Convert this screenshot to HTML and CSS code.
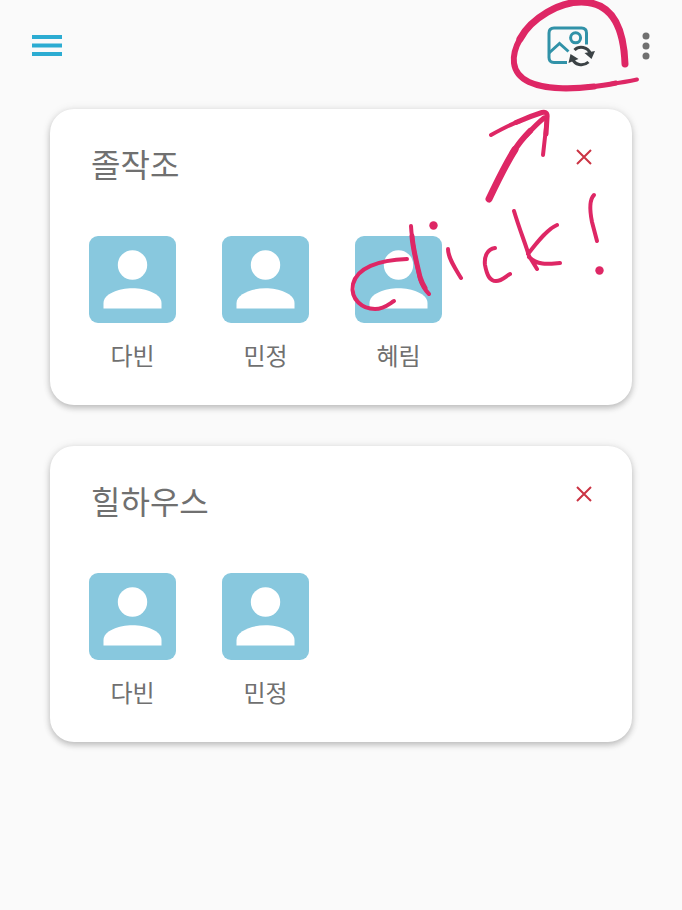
FILE: index.html
```html
<!DOCTYPE html>
<html lang="ko">
<head>
<meta charset="utf-8">
<meta name="viewport" content="width=device-width, initial-scale=1">
<title>그룹</title>
<link rel="stylesheet" href="styles.css">
</head>
<body>
<svg class="defs" aria-hidden="true">
  <symbol id="person" viewBox="0 0 87 87">
    <circle cx="43.5" cy="29" r="14.7"/>
    <path d="M14.5 72.5V67C14.5 58 30 52.3 43.5 52.3S72.500 58 72.500 67V72.500Z"/>
  </symbol>
  <symbol id="cross" viewBox="0 0 16 16">
    <path d="M1 1L15 15M15 1L1 15"/>
  </symbol>
</svg>
<div class="app">
  <header class="bar">
    <button class="icon-button" aria-label="메뉴">
      <svg class="menu-icon" viewBox="0 0 30 22"><path d="M0 2H30M0 10.500H30M0 19H30"/></svg>
    </button>
    <div class="actions">
      <button class="icon-button" aria-label="사진 변경">
        <svg class="photo-icon" viewBox="0 0 50 44">
          <path class="frame" d="M21 38.500H8Q3 38.500 3 33.500V9Q3 4 8 4H35.500Q40.500 4 40.500 9V20.500"/>
          <path class="frame" d="M3 29L13.500 19.500L22.500 27.500"/>
          <circle class="frame" cx="29.600" cy="13.800" r="5"/>
          <path class="arrow" d="M28.500 26C33 21.500 42 22.500 44.500 30M42.500 38C37 43 28.500 41 26.500 34.500"/>
          <path class="head" d="M38.500 29L49 27L45.500 35ZM22.500 39L24.500 30L32.500 35Z"/>
        </svg>
      </button>
      <button class="icon-button" aria-label="더보기">
        <svg class="more-icon" viewBox="0 0 8 28"><circle cx="4" cy="4" r="3.500"/><circle cx="4" cy="14" r="3.500"/><circle cx="4" cy="24" r="3.500"/></svg>
      </button>
    </div>
  </header>
  <main class="groups">
    <section class="card">
      <div class="card-head">
        <h2 class="title">졸작조</h2>
        <button class="icon-button" aria-label="졸작조 삭제"><svg class="close-icon"><use href="#cross"/></svg></button>
      </div>
      <ul class="members">
        <li class="member"><svg class="avatar"><use href="#person"/></svg><span>다빈</span></li>
        <li class="member"><svg class="avatar"><use href="#person"/></svg><span>민정</span></li>
        <li class="member"><svg class="avatar"><use href="#person"/></svg><span>혜림</span></li>
      </ul>
    </section>
    <section class="card">
      <div class="card-head">
        <h2 class="title">힐하우스</h2>
        <button class="icon-button" aria-label="힐하우스 삭제"><svg class="close-icon"><use href="#cross"/></svg></button>
      </div>
      <ul class="members">
        <li class="member"><svg class="avatar"><use href="#person"/></svg><span>다빈</span></li>
        <li class="member"><svg class="avatar"><use href="#person"/></svg><span>민정</span></li>
      </ul>
    </section>
  </main>
  <svg class="ink" viewBox="0 0 682 320" role="img" aria-label="click!">
    <path class="bold" d="M625 64C624 35 616 6 588 2.500C560 -1 530 20 520 39"/>
    <path class="medium" d="M520 39C511 55 510 73 529 82C544 89 570 89.500 594 86.500"/>
    <path class="regular" d="M588 87C599 86 607 85 616 83"/>
    <path class="fine" d="M610 84Q626 82 637 79.500"/>
    <path class="bold" d="M489 199C498 180 507 162 515 149.500"/>
    <path class="medium" d="M513 152.500C518 144 524 137 530 131"/>
    <path class="regular" d="M526 135.500C533 128 539 122 544 118"/>
    <path class="fine" d="M491 135C500 130 511 124 520 121"/>
    <path class="regular" d="M516 122.500C526 118 534 115 542 112.500Q548 111 547 118L546 134"/>
    <path class="fine" d="M547 119L543 155"/>
    <g class="fine">
      <path d="M407 259C378 260 357 268 353 284C350 300 363 309 375 309C384 309 389 304 394 301"/>
      <path d="M411 226C412 246 417 264 420 279C422 285 425 290 429 294"/>
      <path d="M448 249C448 258 455 268 461 278"/>
      <path d="M495 248C487 249 484 257 485 265C487 276 490 281 496 281C502 281 506 276 510 274"/>
      <path d="M514 211C520 231 526 245 529 256L537 269M528 254C536 244 547 229 557 225M529 257C538 266 549 264 560 263"/>
      <path d="M594 195C589 200 590 212 592 222L597 241"/>
    </g>
    <path class="regular" d="M412 236C413 250 417 264 420 277Q422 283 425 288"/>
    <circle cx="433.500" cy="225.500" r="4.200"/>
    <circle cx="599.500" cy="270.500" r="4.200"/>
  </svg>
</div>
</body>
</html>
```

FILE: styles.css
```css
* {
  box-sizing: border-box;
}

body {
  margin: 0;
  background: #fafafa;
  color: #707070;
  font-family: "Noto Sans CJK KR", sans-serif;
}

.defs {
  position: absolute;
  width: 0;
  height: 0;
}

.app {
  position: relative;
  min-height: 100vh;
  overflow: hidden;
}

.icon-button {
  display: flex;
  padding: 0;
  border: 0;
  background: none;
  cursor: pointer;
}

.bar {
  display: flex;
  align-items: center;
  justify-content: space-between;
  height: 92px;
  padding: 0 32px;
}

.menu-icon {
  width: 30px;
  height: 22px;
  stroke: #2cacd2;
  stroke-width: 4;
}

.actions {
  display: flex;
  align-items: center;
  gap: 46px;
}

.photo-icon {
  width: 50px;
  height: 44px;
  fill: none;
}

.frame {
  stroke: #3192a8;
  stroke-width: 3;
}

.arrow {
  stroke: #3b4245;
  stroke-width: 3;
}

.head {
  fill: #3b4245;
}

.more-icon {
  width: 8px;
  height: 28px;
  fill: #707070;
}

.groups {
  display: flex;
  flex-direction: column;
  gap: 41px;
  padding: 17px 50px 40px;
}

.card {
  padding: 32px 39px 34px;
  border-radius: 24px;
  background: #fff;
  box-shadow: 0 3px 6px rgba(0, 0, 0, 0.22), 0 0 10px rgba(0, 0, 0, 0.08);
}

.card-head {
  display: flex;
  align-items: flex-start;
  justify-content: space-between;
  padding: 0 1px 0 2px;
}

.card-head .icon-button {
  padding: 8px 0;
}

.title {
  margin: 0;
  font-size: 32px;
  font-weight: 400;
  line-height: 44px;
}

.close-icon {
  width: 16px;
  height: 16px;
  stroke: #cb3444;
  stroke-width: 2;
}

.members {
  display: flex;
  gap: 46px;
  margin: 0;
  padding: 51px 0 0;
  list-style: none;
}

.member {
  display: flex;
  flex-direction: column;
  align-items: center;
  gap: 16px;
  font-size: 24px;
  line-height: 32px;
}

.avatar {
  width: 87px;
  height: 87px;
  border-radius: 9px;
  background: #88c8de;
  fill: #fff;
}

.ink {
  position: absolute;
  top: 0;
  left: 0;
  width: 100%;
  fill: #de2765;
  pointer-events: none;
}

.ink path {
  fill: none;
  stroke: #de2765;
  stroke-linecap: round;
  stroke-linejoin: round;
}

.bold {
  stroke-width: 7;
}

.medium {
  stroke-width: 6;
}

.regular {
  stroke-width: 5;
}

.fine {
  stroke-width: 4;
}
```
